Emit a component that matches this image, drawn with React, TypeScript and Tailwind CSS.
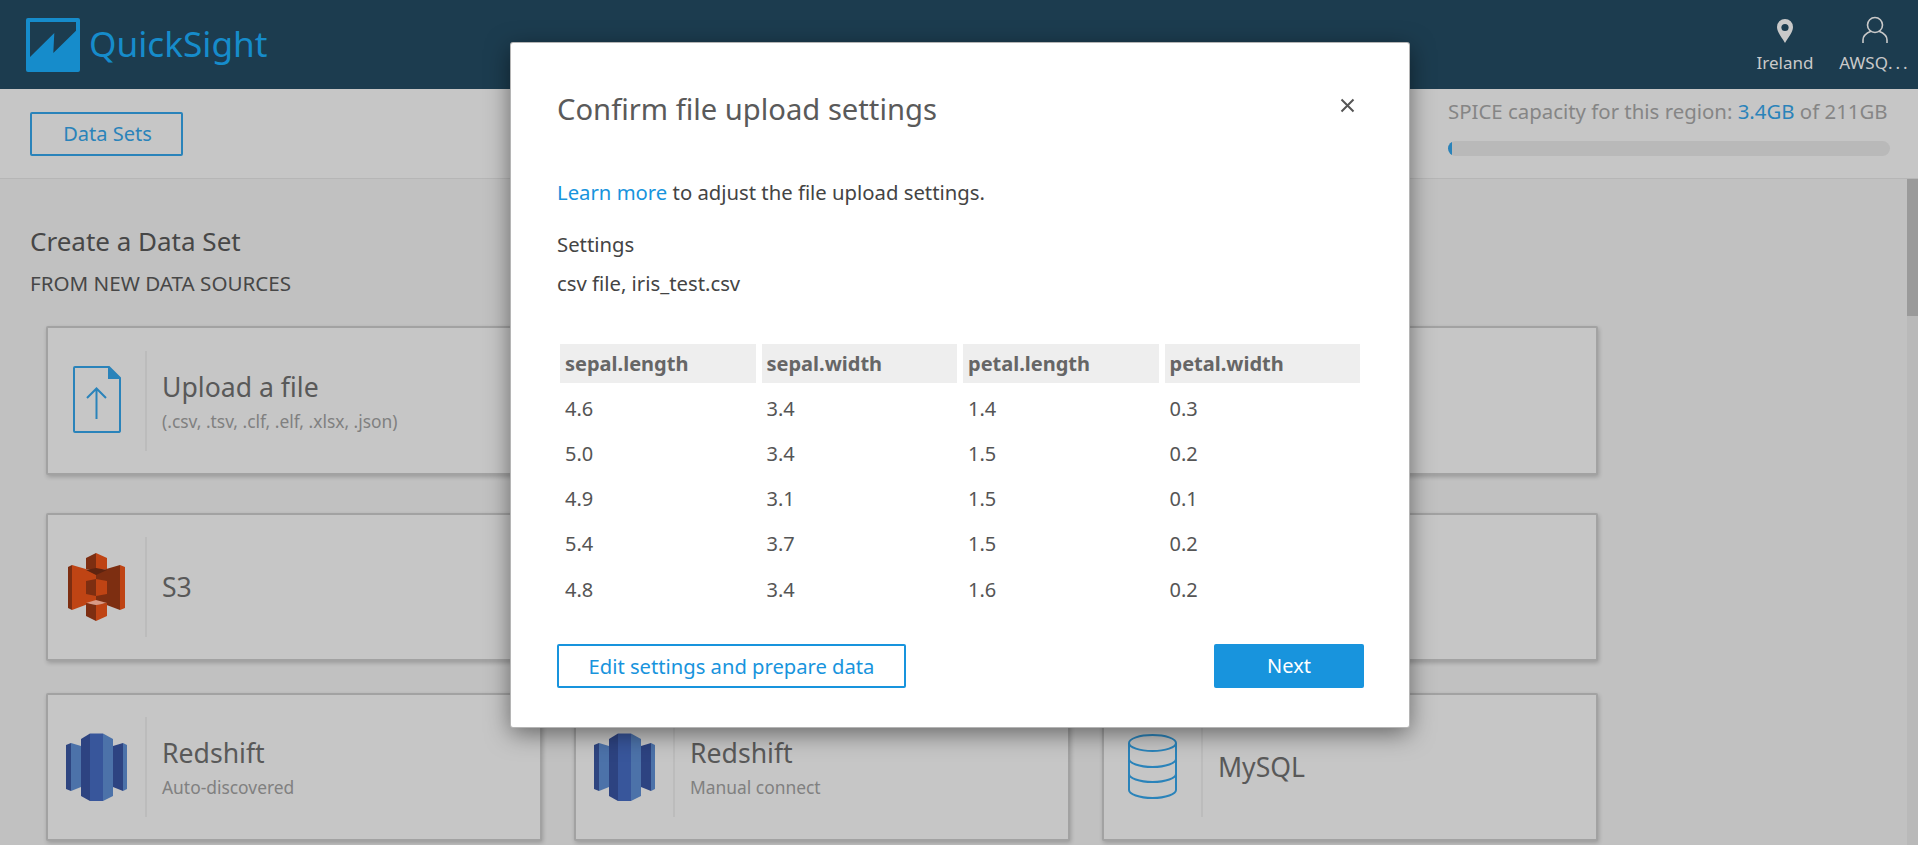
import React from "react";

function Logo() {
  return (
    <svg width="54" height="54" viewBox="0 0 54 54" className="shrink-0">
      <rect width="54" height="54" rx="2" fill="#168ccb" />
      <polygon points="4,4 50,4 50,12.7 27.3,35 28.3,15 4,39" fill="#1c3c4f" />
    </svg>
  );
}

function Pin() {
  return (
    <svg width="16" height="24" viewBox="0 0 16 24">
      <path d="M8 0a8 8 0 0 1 8 8c0 5-5 11-8 16c-3-5-8-11-8-16a8 8 0 0 1 8-8z" fill="#c9c9c9" />
      <circle cx="8" cy="8.5" r="3.6" fill="#1c3c4f" />
    </svg>
  );
}

function User() {
  return (
    <svg width="26" height="27" viewBox="0 0 26 27" fill="none" stroke="#c9c9c9" strokeWidth="1.6">
      <circle cx="13" cy="9" r="7.5" />
      <path d="M1 27v-3c0-5 5-7.5 8-8.7M25 27v-3c0-5-5-7.5-8-8.7" />
    </svg>
  );
}

function UploadIcon() {
  return (
    <svg width="48" height="68" viewBox="0 0 48 68" fill="none">
      <path d="M2 1h34l11 11v53a2 2 0 0 1-1 1H2a1 1 0 0 1-1-1V2a1 1 0 0 1 1-1z" stroke="#2a83ba" strokeWidth="2" />
      <polygon points="35,1 47,12 47,13 35,13" fill="#2a83ba" />
      <path d="M23.5 53V23M14 32l9.5-9.5L33 32" stroke="#2a83ba" strokeWidth="2" />
    </svg>
  );
}

function S3Icon() {
  const l = "#bf4414";
  const d = "#7d2e11";
  return (
    <svg width="57" height="68" viewBox="18 14 57 68">
      <polygon points="18,28 22,26 22,71 18,69" fill={d} />
      <polygon points="22,26 46,33 46,62 22,71" fill={l} />
      <polygon points="46,33 70,26 70,71 46,62" fill={d} />
      <polygon points="70,26 75,28 75,69 70,71" fill={l} />
      <polygon points="36,19 46,14 46,32 36,30" fill={d} />
      <polygon points="46,14 57,19 57,30 46,32" fill={l} />
      <polygon points="36,31 46,29 57,31 46,36" fill="#5e2410" />
      <polygon points="36,42 46,40 46,57 36,55" fill={d} />
      <polygon points="46,40 57,42 57,55 46,57" fill={l} />
      <polygon points="36,64 46,61 57,64 46,66" fill="#d99a85" />
      <polygon points="36,64 46,66 46,82 36,77" fill={d} />
      <polygon points="46,66 57,64 57,77 46,82" fill={l} />
    </svg>
  );
}

function RedshiftIcon() {
  return (
    <svg width="61" height="68" viewBox="16 14 61 68">
      <polygon points="16,26 21,24 21,72 16,70" fill="#2e4580" />
      <polygon points="21,24 31,27 31,68 21,72" fill="#4c72a9" />
      <polygon points="31,20 40,14.5 40,82 31,77" fill="#2d4381" />
      <polygon points="40,14.5 53,14.5 53,82 40,82" fill="#38569b" />
      <polygon points="53,14.5 63,20 63,77 53,82" fill="#4c72a9" />
      <polygon points="63,27 73,24 73,72 63,68" fill="#2d4381" />
      <polygon points="73,24 77,26 77,70 73,72" fill="#4c72a9" />
    </svg>
  );
}

function DbIcon() {
  return (
    <svg width="49" height="65" viewBox="0 0 49 65" fill="none" stroke="#2a83ba" strokeWidth="2">
      <ellipse cx="24.5" cy="9" rx="23.5" ry="8" />
      <path d="M1 9v47c0 4 10 8 23.5 8S48 60 48 56V9" />
      <path d="M1 25c0 4 10 8 23.5 8S48 29 48 25" />
      <path d="M1 40c0 4 10 8 23.5 8S48 44 48 40" />
    </svg>
  );
}

function Card({ icon, title, sub }: { icon?: React.ReactNode; title?: string; sub?: string }) {
  return (
    <div className="w-[496px] h-full bg-[#c6c6c6] border-2 border-[#a2a2a2] rounded-[2px] shadow-[1px_2px_4px_rgba(0,0,0,0.2)] flex items-center">
      {icon !== undefined && (
        <>
          <div className="w-[97px] h-[100px] flex items-center justify-center -mt-[1px]">{icon}</div>
          <div className="w-[2px] h-[100px] bg-[#bcbcbc]" />
          <div className="ml-[15px] flex flex-col">
            <div className="text-[26.6px] leading-[36px] text-[#595959]">{title}</div>
            {sub && <div className="text-[17.4px] leading-[24px] mt-[4px] text-[#808080]">{sub}</div>}
          </div>
        </>
      )}
    </div>
  );
}

const headers = ["sepal.length", "sepal.width", "petal.length", "petal.width"];
const rows = [
  ["4.6", "3.4", "1.4", "0.3"],
  ["5.0", "3.4", "1.5", "0.2"],
  ["4.9", "3.1", "1.5", "0.1"],
  ["5.4", "3.7", "1.5", "0.2"],
  ["4.8", "3.4", "1.6", "0.2"],
];

export default function App() {
  return (
    <div className="relative h-[845px] overflow-hidden flex flex-col bg-[#c1c1c1] font-['Noto_Sans','Open_Sans',sans-serif]">
      <header className="h-[89px] shrink-0 bg-[#1c3c4f] flex items-center justify-between pl-[26px]">
        <div className="flex items-center gap-[9px]">
          <Logo />
          <span className="text-[35.2px] leading-[48px] -mt-[4px] text-[#168ccb]">QuickSight</span>
        </div>
        <div className="flex items-start pr-[9px] pt-[1px] text-[17px] leading-[22px] text-[#c9c9c9]">
          <div className="w-[56px] flex flex-col items-center">
            <div className="h-[34px] pt-[3px]"><Pin /></div>
            <div className="mt-[2px] whitespace-nowrap">Ireland</div>
          </div>
          <div className="w-[68px] ml-[28px] flex flex-col items-center">
            <div className="h-[34px]"><User /></div>
            <div className="mt-[2px] whitespace-nowrap">AWSQ<span className="tracking-[3px]">...</span></div>
          </div>
        </div>
      </header>

      <div className="h-[90px] shrink-0 bg-[#c6c6c6] border-b border-[#b6b6b6] flex items-start justify-between pl-[30px] pr-[28px]">
        <button className="mt-[23px] w-[153px] h-[44px] pl-[2px] border-2 border-[#2a83ba] rounded-[2px] text-[20px] text-[#2a83ba]">Data Sets</button>
        <div className="w-[442px]">
          <div className="mt-[10px] text-[20.4px] leading-[24px] text-[#858585] whitespace-nowrap">
            SPICE capacity for this region: <span className="text-[#2a83ba]">3.4GB</span> of 211GB
          </div>
          <div className="mt-[18px] h-[15px] bg-[#b9b9b9] rounded-full overflow-hidden">
            <div className="w-[4px] h-full bg-[#2a83ba]" />
          </div>
        </div>
      </div>

      <div className="flex-1 flex min-h-0">
        <main className="flex-1 overflow-hidden pt-[46px] pl-[30px]">
          <h1 className="text-[26px] leading-[32px] text-[#474747]">Create a Data Set</h1>
          <div className="mt-[14px] text-[20.6px] leading-[24px] text-[#474747]">FROM NEW DATA SOURCES</div>
          <div className="mt-[31px] ml-[16px] flex flex-col">
            <div className="flex gap-[32px] h-[149px]">
              <Card icon={<UploadIcon />} title="Upload a file" sub="(.csv, .tsv, .clf, .elf, .xlsx, .json)" />
              <Card />
              <Card />
            </div>
            <div className="flex gap-[32px] h-[148px] mt-[38px]">
              <Card icon={<S3Icon />} title="S3" />
              <Card />
              <Card />
            </div>
            <div className="flex gap-[32px] h-[148px] mt-[32px]">
              <Card icon={<RedshiftIcon />} title="Redshift" sub="Auto-discovered" />
              <Card icon={<RedshiftIcon />} title="Redshift" sub="Manual connect" />
              <Card icon={<DbIcon />} title="MySQL" />
            </div>
          </div>
        </main>
        <div className="w-[11px] shrink-0 bg-[#b9b9b9]">
          <div className="h-[137px] bg-[#9a9a9a]" />
        </div>
      </div>

      <div className="absolute left-[511px] top-[43px] w-[898px] h-[684px] bg-white rounded-[2px] shadow-[0_0_0_1px_#b5b5b5,0_6px_24px_rgba(0,0,0,0.5)] pl-[46px] pr-[45px] pt-[46px] flex flex-col">
        <div className="flex items-start justify-between">
          <h2 className="text-[29.2px] leading-[40px] text-[#5a5a5a]">Confirm file upload settings</h2>
          <button className="mr-[7px] -mt-[2px] w-[20px] h-[36px] flex items-center justify-center">
            <svg width="15" height="15" viewBox="0 0 15 15" stroke="#555" strokeWidth="2">
              <path d="M1.5 1.5l12 12M13.5 1.5l-12 12" />
            </svg>
          </button>
        </div>
        <p className="mt-[51px] text-[20.3px] leading-[24px] text-[#444]">
          <span className="text-[#1894dd]">Learn more</span> to adjust the file upload settings.
        </p>
        <p className="mt-[28px] text-[20.3px] leading-[24px] text-[#444]">Settings</p>
        <p className="mt-[15px] text-[20.3px] leading-[24px] text-[#444]">csv file, iris_test.csv</p>
        <div className="mt-[49px] ml-[3px] w-[800px] grid grid-cols-4 gap-x-[6px]">
          {headers.map((h) => (
            <div key={h} className="h-[39px] bg-[#eeeeee] px-[5px] flex items-center text-[20px] font-bold text-[#666]">{h}</div>
          ))}
          {rows.map((r, i) =>
            r.map((c, j) => (
              <div key={`${i}-${j}`} className={`h-[45.25px] px-[5px] flex items-center text-[20px] text-[#555] ${i === 0 ? "mt-[3px]" : ""}`}>{c}</div>
            ))
          )}
        </div>
        <div className="mt-auto mb-[39px] flex justify-between">
          <button className="w-[349px] h-[44px] border-2 border-[#1894dd] rounded-[2px] text-[20.2px] text-[#1894dd]">Edit settings and prepare data</button>
          <button className="w-[150px] h-[44px] bg-[#1894dd] rounded-[2px] text-[20px] text-white">Next</button>
        </div>
      </div>
    </div>
  );
}
